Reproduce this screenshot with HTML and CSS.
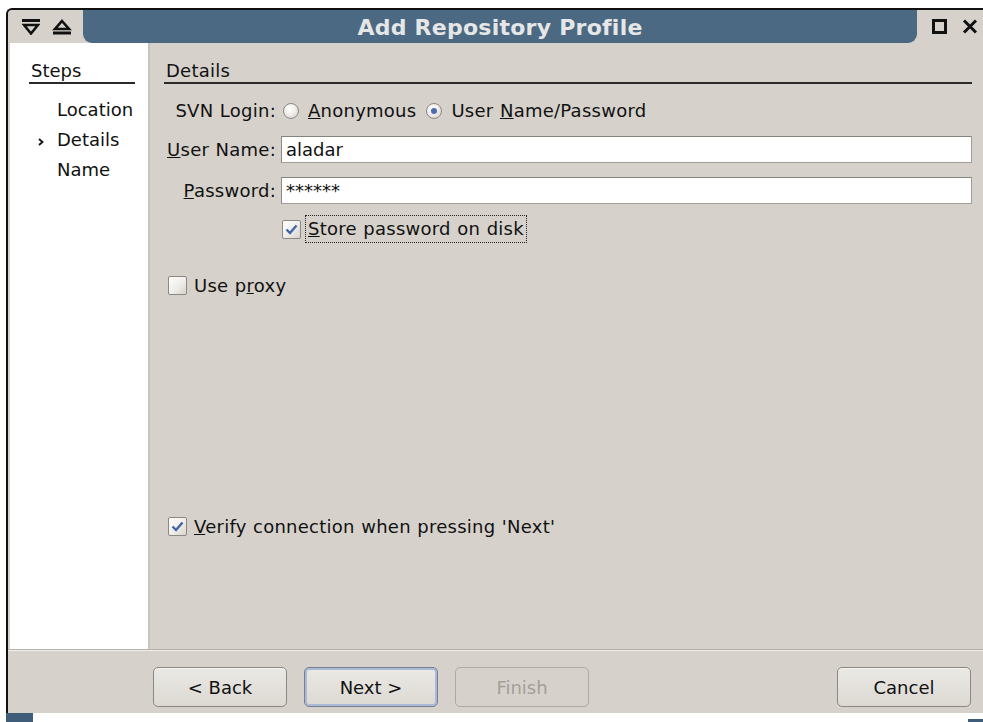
FILE: index.html
```html
<!DOCTYPE html>
<html lang="en">
<head>
<meta charset="utf-8">
<title>Add Repository Profile</title>
<link rel="stylesheet" href="styles.css">
</head>
<body>
<div class="screen">
  <div class="window">
    <header class="titlebar">
      <div class="tb-side tb-left">
        <svg class="tb-icon" width="18" height="16" viewBox="0 0 18 16">
          <rect x="0" y="0" width="18" height="3" fill="#111"/>
          <polygon points="2,6 16,6 9,14.5" fill="none" stroke="#111" stroke-width="2.6" stroke-linejoin="miter"/>
        </svg>
        <svg class="tb-icon" width="20" height="16" viewBox="0 0 20 16">
          <polygon points="10,2 17,10 3,10" fill="none" stroke="#111" stroke-width="2.6"/>
          <rect x="1" y="12.5" width="18" height="3" fill="#111"/>
        </svg>
      </div>
      <div class="tb-title">Add Repository Profile</div>
      <div class="tb-side tb-right">
        <svg class="tb-icon" width="15" height="15" viewBox="0 0 15 15">
          <rect x="1.5" y="1.5" width="12" height="12" fill="none" stroke="#111" stroke-width="3"/>
        </svg>
        <svg class="tb-icon" width="16" height="15" viewBox="0 0 16 15">
          <path d="M2 1.5 L14 13.5 M14 1.5 L2 13.5" stroke="#111" stroke-width="3" fill="none"/>
        </svg>
      </div>
    </header>

    <div class="main">
      <aside class="steps">
        <div class="steps-title">Steps</div>
        <ol class="steps-list">
          <li class="step"><span class="step-mark"></span><span>Location</span></li>
          <li class="step step-current">
            <span class="step-mark">
              <svg width="6" height="8" viewBox="0 0 6 8"><polyline points="1,1 4.5,4 1,7" fill="none" stroke="#111" stroke-width="1.8"/></svg>
            </span>
            <span>Details</span>
          </li>
          <li class="step"><span class="step-mark"></span><span>Name</span></li>
        </ol>
      </aside>

      <section class="panel">
        <div class="panel-title">Details</div>

        <div class="form">
          <div class="form-row row-login">
            <span class="label">SVN Login:</span>
            <div class="radios">
              <label class="radio"><span class="radio-dot"></span><span><u>A</u>nonymous</span></label>
              <label class="radio"><span class="radio-dot radio-on"></span><span>User <u>N</u>ame/Password</span></label>
            </div>
          </div>

          <div class="form-row row-field">
            <span class="label"><u>U</u>ser Name:</span>
            <div class="entry">aladar</div>
          </div>

          <div class="form-row row-field row-password">
            <span class="label"><u>P</u>assword:</span>
            <div class="entry entry-secret">******</div>
          </div>

          <div class="form-row row-store">
            <span class="label"></span>
            <label class="check check-inline">
              <span class="check-box">
                <svg width="13" height="11" viewBox="0 0 13 11"><polyline points="1.5,5.5 5,9 11.5,1.5" fill="none" stroke="#4465a8" stroke-width="2.4"/></svg>
              </span>
              <span class="check-text focused"><u>S</u>tore password on disk</span>
            </label>
          </div>
        </div>

        <label class="check check-proxy">
          <span class="check-box"></span>
          <span class="check-text">Use p<u>r</u>oxy</span>
        </label>

        <label class="check check-verify">
          <span class="check-box">
            <svg width="13" height="11" viewBox="0 0 13 11"><polyline points="1.5,5.5 5,9 11.5,1.5" fill="none" stroke="#4465a8" stroke-width="2.4"/></svg>
          </span>
          <span class="check-text"><u>V</u>erify connection when pressing 'Next'</span>
        </label>
      </section>
    </div>

    <footer class="buttons">
      <button class="btn">&lt; Back</button>
      <button class="btn btn-default">Next &gt;</button>
      <button class="btn btn-disabled" disabled>Finish</button>
      <span class="spacer"></span>
      <button class="btn">Cancel</button>
    </footer>
  </div>
  <div class="frame-bottom">
    <span class="grip grip-left"></span>
    <span class="grip grip-right"></span>
  </div>
</div>
</body>
</html>
```

FILE: styles.css
```css
* {
  box-sizing: border-box;
}

html, body {
  margin: 0;
  padding: 0;
  background: #ffffff;
}

body {
  width: 983px;
  height: 722px;
  overflow: hidden;
  font-family: "DejaVu Sans", "Liberation Sans", sans-serif;
  font-size: 18px;
  color: #111;
}

.screen {
  width: 983px;
  height: 722px;
  padding: 8px 0 0 6px;
  display: flex;
  flex-direction: column;
}

/* Dialog window */
.window {
  height: 705px;
  display: flex;
  flex-direction: column;
  background: #d6d2cb;
  border-top: 2px solid #111;
  border-left: 2px solid #111;
  border-top-left-radius: 6px;
}

/* Title bar */
.titlebar {
  height: 33px;
  display: flex;
  flex-shrink: 0;
}

.tb-side {
  display: flex;
  align-items: center;
  background: #d6d2cb;
}

.tb-left {
  width: 75px;
  padding-left: 14px;
  gap: 12px;
  border-top-left-radius: 5px;
}

.tb-right {
  width: 66px;
  padding-left: 15px;
  gap: 15px;
}

.tb-icon {
  display: block;
}

.tb-title {
  flex: 1;
  background: #4b6983;
  border-radius: 0 0 9px 9px;
  color: #e6e6e6;
  font-weight: bold;
  font-size: 22px;
  letter-spacing: 0.25px;
  line-height: 33px;
  text-align: center;
  padding-top: 1px;
}

/* Body: steps list + page */
.main {
  flex: 1;
  display: flex;
  min-height: 0;
}

.steps {
  width: 140px;
  margin-left: 2px;
  background: #ffffff;
  border-right: 2px solid #c9c5be;
  padding-top: 17px;
}

.steps-title {
  margin: 0 13px 0 19px;
  padding: 0 0 1px 2px;
  line-height: 21px;
  border-bottom: 2px solid #2a2a2a;
}

.steps-list {
  list-style: none;
  margin: 11px 0 0;
  padding: 0 0 0 28px;
}

.step {
  display: flex;
  align-items: center;
  line-height: 30px;
}

.step-mark {
  width: 19px;
  display: flex;
  align-items: center;
  padding-top: 3px;
}

.panel {
  flex: 1;
  display: flex;
  flex-direction: column;
  padding: 17px 11px 112px 14px;
  letter-spacing: 0.25px;
  word-spacing: 0.5px;
}

.panel-title {
  padding: 0 0 1px 2px;
  line-height: 21px;
  border-bottom: 2px solid #2a2a2a;
}

.form {
  display: flex;
  flex-direction: column;
}

.form-row {
  display: grid;
  grid-template-columns: 112px 1fr;
  column-gap: 5px;
  align-items: center;
}

.label {
  text-align: right;
  line-height: 21px;
  white-space: nowrap;
}

.row-login {
  margin-top: 16px;
}

.radios {
  display: flex;
  align-items: center;
  padding-left: 2px;
  gap: 10px;
}

.radio {
  display: flex;
  align-items: center;
  gap: 9px;
  line-height: 21px;
}

.radio-dot {
  width: 16px;
  height: 16px;
  border-radius: 50%;
  border: 1px solid #8d8982;
  background: radial-gradient(circle at 40% 35%, #ffffff 0%, #f0eeeb 45%, #cfcbc5 100%);
  display: flex;
  align-items: center;
  justify-content: center;
}

.radio-on::after {
  content: "";
  width: 6px;
  height: 6px;
  border-radius: 50%;
  background: #4a6cae;
}

.row-field {
  margin-top: 15px;
}

.row-password {
  margin-top: 14px;
}

.entry {
  height: 27px;
  background: #ffffff;
  border: 1px solid #a29e97;
  border-top-color: #86827c;
  border-left-color: #8d8983;
  padding: 0 4px;
  line-height: 25px;
  letter-spacing: 0;
}

.row-store {
  margin-top: 11px;
}

/* Check boxes */
.check {
  display: flex;
  align-items: center;
  line-height: 21px;
}

.check-box {
  width: 19px;
  height: 19px;
  border: 1px solid #8d8982;
  border-radius: 2px;
  background: linear-gradient(135deg, #ffffff 0%, #efede9 55%, #d8d4ce 100%);
  display: flex;
  align-items: center;
  justify-content: center;
  flex-shrink: 0;
}

.check-text {
  margin-left: 7px;
  white-space: nowrap;
}

.check-inline {
  margin-left: 1px;
}

.check-inline .check-text {
  margin-left: 4px;
}

.focused {
  border: 1px dotted #222;
  padding: 2px 2px 2px 2px;
  line-height: 22px;
}

.check-proxy {
  margin: 32px 0 0 4px;
}

.check-verify {
  margin: auto 0 0 4px;
}

/* Button row */
.buttons {
  height: 64px;
  flex-shrink: 0;
  display: flex;
  align-items: flex-start;
  padding: 17px 12px 0 145px;
  border-top: 1px solid #b4b0a9;
  box-shadow: inset 0 1px 0 #f1efeb;
}

.btn {
  width: 134px;
  height: 40px;
  margin: 0;
  padding: 0;
  font-family: inherit;
  font-size: 18px;
  color: #111;
  border: 1px solid #8a8680;
  border-radius: 5px;
  background: linear-gradient(#ebe9e5, #dcd9d3);
  box-shadow: inset 0 1px 0 #f6f5f2;
}

.btn + .btn {
  margin-left: 17px;
}

.btn-default {
  border-color: #77808f;
  box-shadow: inset 0 0 0 2px #a9b9d6;
}

.btn-disabled {
  color: #a39f98;
  border-color: #aeaaa3;
  background: #d6d2cb;
  box-shadow: none;
}

.spacer {
  flex: 1;
}

/* Window frame below the dialog */
.frame-bottom {
  height: 9px;
  display: flex;
  justify-content: space-between;
  align-items: flex-end;
}

.grip {
  display: block;
  background: #3f5c78;
}

.grip-left {
  width: 27px;
  height: 9px;
}

.grip-right {
  width: 15px;
  height: 3px;
}
```
